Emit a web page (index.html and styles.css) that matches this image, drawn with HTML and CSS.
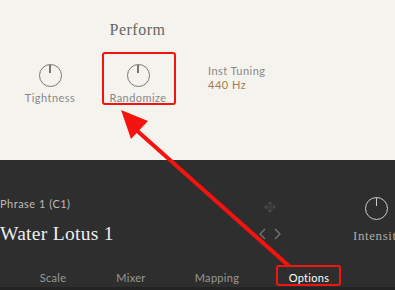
FILE: index.html
```html
<!DOCTYPE html>
<html lang="en">
<head>
  <meta charset="UTF-8" />
  <title>Perform Options</title>
  <link rel="stylesheet" href="styles.css">
</head>
<body>
  <div class="top">
    <h2 class="perform">Perform</h2>
    <div class="controls">
      <div class="knob-group tight">
        <div class="knob"></div>
        <span class="label">Tightness</span>
      </div>
      <div class="knob-group rand">
        <div class="knob"></div>
        <span class="label">Randomize</span>
      </div>
      <div class="tuning">
        <span class="label">Inst Tuning</span>
        <span class="hz">440 Hz</span>
      </div>
    </div>
  </div>

  <div class="bottom">
    <div class="phrase-row">
      <div class="phrase">
        <span class="phrase-sub">Phrase 1 (C1)</span>
        <span class="phrase-name">Water Lotus 1</span>
      </div>
      <div class="nav-icons">
        <svg width="16" height="16" viewBox="0 0 16 16">
          <path d="M8 2 L10.5 5 H5.5 Z M8 14 L10.5 11 H5.5 Z M2 8 L5 5.5 V10.5 Z M14 8 L11 5.5 V10.5 Z" fill="#4a4a4a"/>
          <rect x="5.5" y="5.5" width="5" height="5" fill="#3c3c3c"/>
        </svg>
        <svg width="22" height="14" viewBox="0 0 22 14">
          <path d="M6 2 L1 7 L6 12 M16 2 L21 7 L16 12" stroke="#777" stroke-width="1.3" fill="none"/>
        </svg>
      </div>
      <div class="knob-group intensity">
        <div class="knob dark"></div>
        <span class="serif-label">Intensity</span>
      </div>
    </div>
    <div class="tabs">
      <span class="tab">Scale</span>
      <span class="tab">Mixer</span>
      <span class="tab">Mapping</span>
      <span class="tab active">Options</span>
    </div>
    <div class="strip"></div>
  </div>

  <div class="mark mark-rand"></div>
  <div class="mark mark-opt"></div>
  <svg class="arrow" width="395" height="290" viewBox="0 0 395 290">
    <line x1="289" y1="266" x2="134" y2="128" stroke="#f5130f" stroke-width="4"/>
    <polygon points="121,110 148,121 131,139" fill="#f5130f"/>
  </svg>
</body>
</html>
```

FILE: styles.css
```css
body {
  margin: 0;
  width: 395px;
  height: 290px;
  overflow: hidden;
  font-family: Lato, "Liberation Sans", sans-serif;
  background: #2e2e2e;
  position: relative;
}
.top {
  height: 160px;
  background: #f5f3ee;
  box-sizing: border-box;
  padding-top: 20px;
}
.perform {
  margin: 0;
  width: 275px;
  text-align: center;
  font-family: "Liberation Serif", serif;
  font-weight: normal;
  font-size: 16px;
  line-height: 20px;
  color: #666;
  letter-spacing: 0.5px;
}
.controls {
  display: flex;
  align-items: flex-start;
  margin-top: 24px;
}
.knob-group {
  display: flex;
  flex-direction: column;
  align-items: center;
  flex-shrink: 0;
}
.tight { width: 60px; margin-left: 20px; }
.rand { width: 60px; margin-left: 28px; }
.knob {
  width: 21px;
  height: 21px;
  border: 1.3px solid #777;
  border-radius: 50%;
  position: relative;
}
.knob::after {
  content: "";
  position: absolute;
  left: 50%;
  top: 0;
  width: 1.5px;
  height: 8px;
  margin-left: -0.75px;
  background: #777;
}
.knob.dark { border-color: #ccc; }
.knob.dark::after { background: #ccc; }
.label {
  font-size: 11px;
  color: #888;
  letter-spacing: 0.45px;
  margin-top: 4px;
  line-height: 14px;
}
.tuning {
  display: flex;
  flex-direction: column;
  margin-left: 40px;
  margin-top: 0;
}
.tuning .label { margin-top: 0; }
.hz {
  font-size: 11px;
  color: #a47c52;
  letter-spacing: 0.5px;
  line-height: 14px;
}
.bottom {
  height: 130px;
  background: #2e2e2e;
  position: relative;
}
.phrase-row {
  display: flex;
  align-items: flex-start;
  padding-top: 34px;
}
.phrase {
  display: flex;
  flex-direction: column;
  width: 259px;
  flex-shrink: 0;
}
.phrase-sub {
  font-size: 11px;
  color: #bbb;
  letter-spacing: 0.5px;
  line-height: 20px;
}
.phrase-name {
  font-family: "Liberation Serif", serif;
  font-size: 19.5px;
  color: #eee;
  letter-spacing: 0.3px;
  line-height: 20px;
  margin-top: 10px;
}
.nav-icons {
  display: flex;
  flex-direction: column;
  align-items: center;
  gap: 12px;
  width: 22px;
  margin-top: 5px;
  flex-shrink: 0;
}
.intensity {
  margin-left: 72px;
  align-items: flex-start;
  margin-top: 3px;
}
.intensity .knob { margin-left: 12px; }
.serif-label {
  font-family: "Liberation Serif", serif;
  font-size: 13px;
  color: #aaa;
  letter-spacing: 0.6px;
  margin-top: 8px;
  white-space: nowrap;
}
.tabs {
  display: flex;
  margin-top: 23px;
  height: 20px;
  align-items: center;
}
.tab {
  font-size: 11px;
  color: #999;
  letter-spacing: 0.3px;
  text-align: center;
  flex-shrink: 0;
}
.tab:nth-child(1) { width: 106px; }
.tab:nth-child(2) { width: 50px; }
.tab:nth-child(3) { width: 122px; }
.tab:nth-child(4) { width: 62px; }
.tab.active { color: #fff; }
.strip {
  position: absolute;
  left: 0;
  right: 0;
  bottom: 0;
  height: 3px;
  background: #232323;
}
.mark {
  position: absolute;
  border: 2.5px solid #f5130f;
  border-radius: 3px;
  box-sizing: border-box;
}
.mark-rand { left: 102px; top: 52px; width: 74px; height: 53px; }
.mark-opt { left: 276px; top: 265px; width: 65px; height: 21px; }
.arrow {
  position: absolute;
  left: 0;
  top: 0;
}
```
